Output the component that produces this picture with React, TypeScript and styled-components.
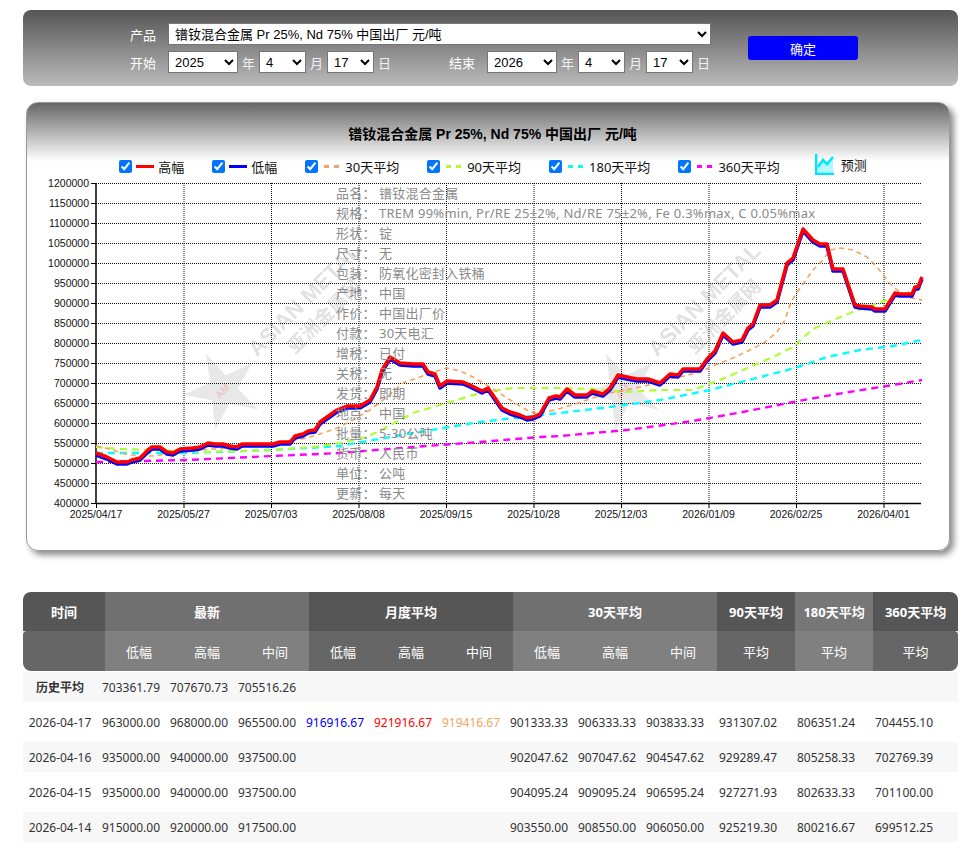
import React from "react";
import styled, { createGlobalStyle } from "styled-components";

const GlobalStyle = createGlobalStyle`
  body {
    margin: 0;
    background: #fff;
    font-family: "Noto Sans", "Noto Sans CJK SC", sans-serif;
  }
`;

// chart geometry, in page pixels (the svg viewBox uses page coordinates)
const PLOT_LEFT = 96;
const PLOT_RIGHT = 921;
const PLOT_TOP = 183;
const PLOT_BOTTOM = 503;
const yFor = (v: number) => PLOT_BOTTOM - (v - 400000) / 2500;

const yTicks = Array.from({ length: 17 }, (_, i) => 400000 + i * 50000);
const xTicks = [
  "2025/04/17",
  "2025/05/27",
  "2025/07/03",
  "2025/08/08",
  "2025/09/15",
  "2025/10/28",
  "2025/12/03",
  "2026/01/09",
  "2026/02/25",
  "2026/04/01",
];

const highLine =
  "96,453 107,457 117,462 127,462 132,460 140,458 143,455 148,450 152,447 160,447 167,452 173,453 180,449 193,448 200,447 208,443 215,444 223,444 230,446 237,447 242,444 273,444 280,442 290,442 295,436 303,434 308,431 315,430 320,422 327,417 337,410 347,406 360,406 370,400 377,387 382,370 390,357 400,363 413,364 423,364 428,372 435,374 440,386 447,381 463,382 470,385 482,391 488,388 502,408 510,412 520,415 527,418 533,417 540,414 545,405 549,398 556,396 560,397 567,389 575,395 587,395 592,391 603,394 610,388 615,380 618,375 627,377 637,379 648,379 660,383 670,374 678,375 683,369 700,369 707,359 715,351 723,333 733,342 742,340 748,328 753,324 760,305 770,305 777,300 787,263 793,258 803,229 813,240 820,244 827,244 833,269 843,269 855,305 860,306 872,307 875,309 885,309 895,293 900,294 912,294 915,287 918,287 922,277";

const avgLines = [
  {
    color: "#f4a460",
    width: 1.6,
    dash: "5 4",
    points:
      "96,446 110,449 125,454 140,456 155,456 170,453 185,452 200,450 215,449 230,448 250,446 270,444 290,441 307,438 323,433 337,428 353,420 370,410 387,397 403,383 420,377 433,372 447,368 460,371 473,377 490,387 507,398 520,406 530,412 540,413 555,410 575,404 593,398 610,393 627,390 645,386 660,381 680,377 700,372 715,365 733,358 750,350 765,342 777,332 785,320 790,305 795,295 803,284 813,270 823,260 830,250 840,248 853,250 867,257 877,267 887,280 893,287 907,297 922,300",
  },
  {
    color: "#adff2f",
    width: 2.2,
    dash: "7 5",
    points:
      "96,447 120,449 153,450 180,451 207,452 240,451 273,450 300,448 313,447 340,443 367,437 387,427 413,413 447,403 480,393 513,388 540,388 560,388 593,389 627,392 660,390 693,390 720,380 743,370 773,357 793,347 813,329 833,320 853,312 873,305 893,298 922,288",
  },
  {
    color: "#00ffff",
    width: 2.4,
    dash: "7 5",
    points:
      "96,453 187,453 273,450 340,446 413,433 480,422 540,415 560,413 610,407 660,400 710,390 760,377 795,368 827,357 860,350 893,346 922,340",
  },
  {
    color: "#ff00ff",
    width: 2.4,
    dash: "7 5",
    points:
      "96,462 187,460 273,456 340,453 413,447 480,442 540,437 560,436 627,430 693,421 743,412 793,402 843,393 893,385 922,380",
  },
];

const legend = [
  { label: "高幅", color: "#ff0000", dashed: false },
  { label: "低幅", color: "#0000ff", dashed: false },
  { label: "30天平均", color: "#f4a460", dashed: true },
  { label: "90天平均", color: "#adff2f", dashed: true },
  { label: "180天平均", color: "#00ffff", dashed: true },
  { label: "360天平均", color: "#ff00ff", dashed: true },
];

const specs: [string, string][] = [
  ["品名：", "镨钕混合金属"],
  ["规格：", "TREM 99%min, Pr/RE 25±2%, Nd/RE 75±2%, Fe 0.3%max, C 0.05%max"],
  ["形状：", "锭"],
  ["尺寸：", "无"],
  ["包装：", "防氧化密封入铁桶"],
  ["产地：", "中国"],
  ["作价：", "中国出厂价"],
  ["付款：", "30天电汇"],
  ["增税：", "已付"],
  ["关税：", "无"],
  ["发货：", "即期"],
  ["地点：", "中国"],
  ["批量：", "5-30公吨"],
  ["货币：", "人民币"],
  ["单位：", "公吨"],
  ["更新：", "每天"],
];

type PriceRow = {
  date: string;
  latest: string[];
  month?: string[];
  d30: string[];
  d90: string;
  d180: string;
  d360: string;
};

const priceRows: PriceRow[] = [
  {
    date: "2026-04-17",
    latest: ["963000.00", "968000.00", "965500.00"],
    month: ["916916.67", "921916.67", "919416.67"],
    d30: ["901333.33", "906333.33", "903833.33"],
    d90: "931307.02",
    d180: "806351.24",
    d360: "704455.10",
  },
  {
    date: "2026-04-16",
    latest: ["935000.00", "940000.00", "937500.00"],
    d30: ["902047.62", "907047.62", "904547.62"],
    d90: "929289.47",
    d180: "805258.33",
    d360: "702769.39",
  },
  {
    date: "2026-04-15",
    latest: ["935000.00", "940000.00", "937500.00"],
    d30: ["904095.24", "909095.24", "906595.24"],
    d90: "927271.93",
    d180: "802633.33",
    d360: "701100.00",
  },
  {
    date: "2026-04-14",
    latest: ["915000.00", "920000.00", "917500.00"],
    d30: ["903550.00", "908550.00", "906050.00"],
    d90: "925219.30",
    d180: "800216.67",
    d360: "699512.25",
  },
];

const monthColors = ["#0000ff", "#ff0000", "#f4a460"];
const subGroups = [
  { key: "latest", bg: "#808080" },
  { key: "month", bg: "#666666" },
  { key: "d30", bg: "#808080" },
];

function Watermark({ x, y }: { x: number; y: number }) {
  const star = Array.from({ length: 10 }, (_, i) => {
    const r = i % 2 === 0 ? 40 : 15;
    const a = (Math.PI / 5) * i - Math.PI / 2;
    return `${(Math.cos(a) * r).toFixed(1)},${(Math.sin(a) * r).toFixed(1)}`;
  }).join(" ");
  return (
    <g transform={`translate(${x} ${y}) rotate(-45)`}>
      <polygon points={star} fill="#000" opacity={0.09} transform="rotate(20)" />
      <text x={-9} y={4} fontSize={10} fontWeight={700} fill="#f00" opacity={0.15} fontFamily="Liberation Sans, sans-serif">
        AM
      </text>
      <g opacity={0.13} fill="#222">
        <text x={47} y={1} fontSize={22} fontWeight={700} fontFamily="Liberation Sans, sans-serif">
          ASIAN METAL
        </text>
        <text x={76} y={26} fontSize={19} fontWeight={700} fontFamily="Noto Sans CJK SC, sans-serif">
          亚洲金属网
        </text>
      </g>
    </g>
  );
}

function PriceChart() {
  return (
    <ChartSvg viewBox="27 176 922 354" width={922} height={354}>
      <Watermark x={223} y={390} />
      <Watermark x={623} y={390} />

      {yTicks.slice(1).map((v) => (
        <line key={v} x1={PLOT_LEFT} x2={PLOT_RIGHT} y1={yFor(v) + 0.5} y2={yFor(v) + 0.5} stroke="#111" strokeDasharray="1 1" />
      ))}
      {xTicks.slice(1).map((_, i) => {
        const x = PLOT_LEFT + 87.5 * (i + 1) + 0.5;
        return <line key={i} x1={x} x2={x} y1={PLOT_TOP} y2={PLOT_BOTTOM} stroke="#111" strokeDasharray="1 1" />;
      })}

      {yTicks.map((v) => (
        <g key={v}>
          <line x1={91} x2={PLOT_LEFT} y1={yFor(v) + 0.5} y2={yFor(v) + 0.5} stroke="#000" />
          <text x={89} y={yFor(v) + 4} textAnchor="end" fontSize={10.5} fill="#111" fontFamily="Liberation Sans, sans-serif">
            {v}
          </text>
        </g>
      ))}
      {xTicks.map((label, i) => {
        const x = PLOT_LEFT + 87.5 * i;
        return (
          <g key={label}>
            <line x1={x + 0.5} x2={x + 0.5} y1={PLOT_BOTTOM} y2={508} stroke="#000" />
            <text x={x} y={518} textAnchor="middle" fontSize={10.5} fill="#111" fontFamily="Liberation Sans, sans-serif">
              {label}
            </text>
          </g>
        );
      })}
      <line x1={PLOT_LEFT} x2={PLOT_LEFT} y1={PLOT_TOP} y2={PLOT_BOTTOM + 1} stroke="#000" strokeWidth={1.5} />
      <line x1={PLOT_LEFT} x2={PLOT_RIGHT} y1={PLOT_BOTTOM + 0.5} y2={PLOT_BOTTOM + 0.5} stroke="#000" strokeWidth={1.5} />

      {avgLines
        .slice()
        .reverse()
        .map((l) => (
          <polyline key={l.color} points={l.points} fill="none" stroke={l.color} strokeWidth={l.width} strokeDasharray={l.dash} />
        ))}
      <polyline points={highLine} transform="translate(0 2)" fill="none" stroke="#0000ff" strokeWidth={3.5} strokeLinejoin="round" />
      <polyline points={highLine} fill="none" stroke="#ff0000" strokeWidth={3.5} strokeLinejoin="round" />
    </ChartSvg>
  );
}

function ForecastIcon() {
  return (
    <svg width="19" height="21" viewBox="0 0 19 21">
      <path d="M3 12 L8 6 L12 10 L18 3 V18 H3 Z" fill="#00e5ff" opacity={0.3} />
      <path d="M1.2 0 V19.8 H19" fill="none" stroke="#00e5ff" strokeWidth={2.4} />
      <polyline points="3,13 8,6 12,10 18,3" fill="none" stroke="#00e5ff" strokeWidth={2.6} />
    </svg>
  );
}

export default function App() {
  return (
    <Page>
      <GlobalStyle />
      <FormPanel>
        <FormRows>
          <FormRow>
            <FormLabel>产品</FormLabel>
            <Select $width={543} defaultValue="prnd">
              <option value="prnd">镨钕混合金属 Pr 25%, Nd 75% 中国出厂 元/吨</option>
            </Select>
          </FormRow>
          <FormRow>
            <FormLabel>开始</FormLabel>
            <Select $width={70} defaultValue="2025">
              <option>2024</option>
              <option>2025</option>
              <option>2026</option>
            </Select>
            <Unit>年</Unit>
            <Select $width={47} defaultValue="4">
              <option>4</option>
            </Select>
            <Unit>月</Unit>
            <Select $width={47} defaultValue="17">
              <option>17</option>
            </Select>
            <Unit>日</Unit>
            <FormLabel $gap={54}>结束</FormLabel>
            <Select $width={70} defaultValue="2026">
              <option>2025</option>
              <option>2026</option>
            </Select>
            <Unit>年</Unit>
            <Select $width={47} defaultValue="4">
              <option>4</option>
            </Select>
            <Unit>月</Unit>
            <Select $width={47} defaultValue="17">
              <option>17</option>
            </Select>
            <Unit>日</Unit>
          </FormRow>
        </FormRows>
        <SubmitButton type="button">确定</SubmitButton>
      </FormPanel>

      <ChartPanel>
        <ChartTitle>镨钕混合金属 Pr 25%, Nd 75% 中国出厂 元/吨</ChartTitle>
        <Legend>
          {legend.map((item) => (
            <LegendItem key={item.label}>
              <Check type="checkbox" defaultChecked />
              <Swatch $color={item.color} $dashed={item.dashed} />
              {item.label}
            </LegendItem>
          ))}
          <Forecast>
            <ForecastIcon />
            预测
          </Forecast>
        </Legend>
        <ChartArea>
          <PriceChart />
          <SpecList>
            {specs.map(([k, v]) => (
              <React.Fragment key={k}>
                <span>{k}</span>
                <span>{v}</span>
              </React.Fragment>
            ))}
          </SpecList>
        </ChartArea>
      </ChartPanel>

      <HeadTable>
        <colgroup>
          <col style={{ width: 82 }} />
          {Array.from({ length: 9 }, (_, i) => (
            <col key={i} style={{ width: 68 }} />
          ))}
          <col style={{ width: 78 }} />
          <col style={{ width: 78 }} />
          <col style={{ width: 85 }} />
        </colgroup>
        <thead>
          <HeadRow>
            <HeadCell $bg="#565656">时间</HeadCell>
            <HeadCell $bg="#707070" colSpan={3}>最新</HeadCell>
            <HeadCell $bg="#565656" colSpan={3}>月度平均</HeadCell>
            <HeadCell $bg="#707070" colSpan={3}>30天平均</HeadCell>
            <HeadCell $bg="#565656">90天平均</HeadCell>
            <HeadCell $bg="#777777">180天平均</HeadCell>
            <HeadCell $bg="#565656">360天平均</HeadCell>
          </HeadRow>
          <SubHeadRow>
            <SubHeadCell $bg="#666666" />
            {subGroups.map((g) =>
              ["低幅", "高幅", "中间"].map((t) => (
                <SubHeadCell key={g.key + t} $bg={g.bg}>
                  {t}
                </SubHeadCell>
              ))
            )}
            <SubHeadCell $bg="#666666">平均</SubHeadCell>
            <SubHeadCell $bg="#808080">平均</SubHeadCell>
            <SubHeadCell $bg="#666666">平均</SubHeadCell>
          </SubHeadRow>
        </thead>
      </HeadTable>

      <BodyTable>
        <colgroup>
          <col style={{ width: 74 }} />
          {Array.from({ length: 9 }, (_, i) => (
            <col key={i} style={{ width: 68 }} />
          ))}
          <col style={{ width: 78 }} />
          <col style={{ width: 78 }} />
          <col style={{ width: 93 }} />
        </colgroup>
        <tbody>
          <BodyRow $striped>
            <Cell $bold>历史平均</Cell>
            <Cell>703361.79</Cell>
            <Cell>707670.73</Cell>
            <Cell>705516.26</Cell>
            <Cell colSpan={9} />
          </BodyRow>
          {priceRows.map((r, i) => (
            <BodyRow key={r.date} $striped={i % 2 === 1}>
              <Cell>{r.date}</Cell>
              {r.latest.map((v, j) => (
                <Cell key={`l${j}`}>{v}</Cell>
              ))}
              {[0, 1, 2].map((j) => (
                <Cell key={`m${j}`} $color={monthColors[j]}>
                  {r.month ? r.month[j] : ""}
                </Cell>
              ))}
              {r.d30.map((v, j) => (
                <Cell key={`d${j}`}>{v}</Cell>
              ))}
              <Cell>{r.d90}</Cell>
              <Cell>{r.d180}</Cell>
              <Cell $last>{r.d360}</Cell>
            </BodyRow>
          ))}
        </tbody>
      </BodyTable>
    </Page>
  );
}

const Page = styled.div`
  padding: 10px 21px 0 23px;
`;

const FormPanel = styled.div`
  display: flex;
  align-items: center;
  height: 76px;
  box-sizing: border-box;
  padding: 0 0 0 107px;
  border-radius: 8px;
  background: linear-gradient(to bottom, #555555, #bbbbbb);
`;

const FormRows = styled.div`
  display: flex;
  flex-direction: column;
  gap: 6px;
`;

const FormRow = styled.div`
  display: flex;
  align-items: center;
  height: 22px;
`;

const FormLabel = styled.span<{ $gap?: number }>`
  width: 38px;
  margin-left: ${(p) => p.$gap ?? 0}px;
  flex-shrink: 0;
  color: #fff;
  font-size: 13px;
`;

const Select = styled.select<{ $width: number }>`
  width: ${(p) => p.$width}px;
  height: 22px;
  box-sizing: border-box;
  padding: 0 0 0 2px;
  border: 1px solid #767676;
  border-radius: 0;
  background: #fff;
  color: #000;
  font-family: "Liberation Sans", "Noto Sans CJK SC", sans-serif;
  font-size: 13px;
`;

const Unit = styled.span`
  margin: 0 4px;
  color: #f2f2f2;
  font-size: 13px;
`;

const SubmitButton = styled.button`
  width: 110px;
  height: 24px;
  margin-left: 34px;
  border: none;
  border-radius: 3px;
  background: #0000ff;
  color: #fff;
  font-family: "Noto Sans CJK SC", sans-serif;
  font-size: 13px;
`;

const ChartPanel = styled.div`
  width: 924px;
  height: 449px;
  box-sizing: border-box;
  margin: 16px 0 0 3px;
  border: 1px solid #999;
  border-radius: 12px;
  background: linear-gradient(to bottom, #666666 0px, #ffffff 58px);
  box-shadow: 4px 4px 6px rgba(0, 0, 0, 0.45);
`;

const ChartTitle = styled.div`
  padding: 21px 0 0 9px;
  line-height: 20px;
  text-align: center;
  font-family: "Liberation Sans", "Noto Sans CJK SC", sans-serif;
  font-size: 14px;
  font-weight: 700;
  color: #000;
`;

const Legend = styled.div`
  display: flex;
  justify-content: center;
  align-items: center;
  gap: 28px;
  height: 19px;
  margin-top: 13px;
  padding-left: 10px;
  font-size: 13px;
  color: #111;
`;

const LegendItem = styled.label`
  display: flex;
  align-items: center;
  white-space: nowrap;
`;

const Check = styled.input`
  width: 13px;
  height: 13px;
  margin: 0;
`;

const Swatch = styled.span<{ $color: string; $dashed: boolean }>`
  width: ${(p) => (p.$dashed ? 15 : 18)}px;
  height: 3px;
  margin: 0 ${(p) => (p.$dashed ? 6 : 4)}px;
  background: ${(p) =>
    p.$dashed
      ? `repeating-linear-gradient(to right, ${p.$color} 0 5px, transparent 5px 10px)`
      : p.$color};
`;

const Forecast = styled.div`
  display: flex;
  align-items: center;
  gap: 7px;
  margin: -5px 0 0 7px;
`;

const ChartArea = styled.div`
  position: relative;
`;

const ChartSvg = styled.svg`
  display: block;
`;

const SpecList = styled.div`
  position: absolute;
  left: 309px;
  top: 7px;
  display: grid;
  grid-template-columns: 43px auto;
  line-height: 20px;
  font-size: 13px;
  letter-spacing: 0.25px;
  color: #8a8a8a;
  white-space: nowrap;
  pointer-events: none;
`;

const HeadTable = styled.table`
  width: 935px;
  margin-top: 41px;
  table-layout: fixed;
  border-collapse: separate;
  border-spacing: 0;
  color: #fff;
  font-size: 13px;
`;

const HeadRow = styled.tr`
  height: 39px;
  & > th:first-child {
    border-top-left-radius: 8px;
  }
  & > th:last-child {
    border-top-right-radius: 8px;
  }
`;

const SubHeadRow = styled.tr`
  height: 40px;
  & > th:first-child {
    border-radius: 4px 0 0 8px;
  }
  & > th:last-child {
    border-radius: 0 4px 8px 0;
  }
`;

const HeadCell = styled.th<{ $bg: string }>`
  padding: 0;
  background: ${(p) => p.$bg};
  font-weight: 700;
  text-align: center;
`;

const SubHeadCell = styled.th<{ $bg: string }>`
  padding: 0;
  background: ${(p) => p.$bg};
  font-weight: 400;
  text-align: center;
`;

const BodyTable = styled.table`
  width: 935px;
  margin-top: -4px;
  table-layout: fixed;
  border-collapse: separate;
  border-spacing: 0 5px;
  font-size: 12px;
  color: #333;
`;

const BodyRow = styled.tr<{ $striped?: boolean }>`
  height: 30px;
  background: ${(p) => (p.$striped ? "#f7f7f7" : "#fff")};
`;

const Cell = styled.td<{ $color?: string; $bold?: boolean; $last?: boolean }>`
  padding: 0 ${(p) => (p.$last ? 15 : 0)}px 0 0;
  text-align: center;
  white-space: nowrap;
  color: ${(p) => p.$color ?? "#333"};
  font-weight: ${(p) => (p.$bold ? 700 : 400)};
`;
